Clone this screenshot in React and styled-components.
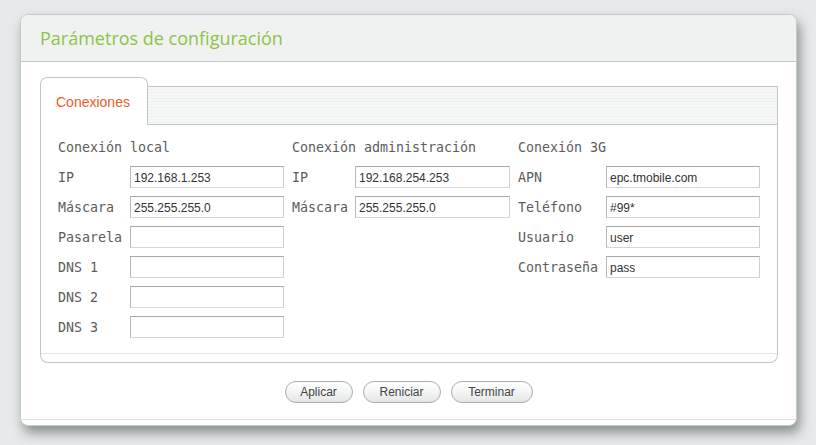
import React from "react";
import styled, { createGlobalStyle } from "styled-components";

const Global = createGlobalStyle`
  html, body { margin: 0; padding: 0; }
  body {
    background: #e7eaea;
    width: 816px;
    height: 445px;
    overflow: hidden;
    font-family: "Liberation Sans", Arial, sans-serif;
  }
`;

const Page = styled.div`
  padding: 14px 19px 0 20px;
`;

const Panel = styled.div`
  width: 777px;
  box-sizing: border-box;
  background: #fff;
  border: 1px solid #c6caca;
  border-radius: 8px;
  box-shadow: 3px 7px 12px rgba(60, 70, 70, 0.55);
  padding-bottom: 5px;
  overflow: hidden;
`;

const Header = styled.div`
  height: 46px;
  background: #f0f2f2;
  border-bottom: 1px solid #c2c6c6;
  display: flex;
  align-items: center;
  padding-left: 19px;
`;

const Title = styled.h1`
  margin: 0;
  font-family: "Open Sans", "DejaVu Sans", sans-serif;
  font-weight: 400;
  font-size: 18px;
  color: #8cc444;
`;

const Body = styled.div`
  padding: 15px 18px 0 19px;
`;

const TabBar = styled.div`
  display: flex;
  align-items: flex-start;
`;

const Tab = styled.div`
  box-sizing: border-box;
  width: 108px;
  height: 48px;
  border: 1px solid #c2c6c6;
  border-bottom: none;
  border-radius: 7px 7px 0 0;
  background: #fff;
  display: flex;
  align-items: center;
  padding-left: 15px;
  font-family: "Liberation Sans", Arial, sans-serif;
  font-size: 14px;
  color: #ea5e1f;
  margin-bottom: -1px;
  position: relative;
  z-index: 1;
`;

const Strip = styled.div`
  flex: 1;
  box-sizing: border-box;
  height: 39px;
  margin-top: 9px;
  margin-left: -1px;
  border: 1px solid #c2c6c6;
  border-left: none;
  background: repeating-linear-gradient(
    to bottom,
    #f6f7f7 0px,
    #f6f7f7 2px,
    #eff1f1 2px,
    #eff1f1 3px
  );
`;

const Content = styled.div`
  border: 1px solid #c2c6c6;
  border-top: none;
  border-radius: 0 0 8px 8px;
  padding-bottom: 8px;
`;

const Inner = styled.div`
  display: flex;
  gap: 8px;
  padding: 11px 17px 15px;
  border-bottom: 1px solid #e2e4e4;
`;

const Column = styled.div`
  display: grid;
  grid-template-columns: ${(p) => p.$label}px ${(p) => p.$input}px;
  grid-auto-rows: 22px;
  row-gap: 8px;
  align-items: center;
  align-content: start;
`;

const Heading = styled.div`
  grid-column: 1 / span 2;
  font-family: "DejaVu Sans Mono", monospace;
  font-size: 13.3px;
  color: #5c5c5c;
  white-space: nowrap;
`;

const Label = styled.label`
  font-family: "DejaVu Sans Mono", monospace;
  font-size: 13.3px;
  color: #5c5c5c;
  white-space: nowrap;
`;

const Input = styled.input`
  box-sizing: border-box;
  width: 100%;
  height: 22px;
  margin: 0;
  padding: 1px 3px 0;
  border: 1px solid;
  border-color: #a8a8a8 #cfcfcf #d6d6d6 #b8b8b8;
  background: #fff;
  font-family: "Liberation Sans", Arial, sans-serif;
  font-size: 12px;
  color: #333;
  outline: none;
`;

const Footer = styled.div`
  display: flex;
  justify-content: center;
  gap: 10px;
  padding: 18px 0 16px;
  border-bottom: 1px solid #dedede;
`;

const Button = styled.button`
  box-sizing: border-box;
  width: ${(p) => p.$w}px;
  height: 22px;
  border: 1px solid #a9adad;
  border-radius: 11px;
  background: linear-gradient(to bottom, #ffffff 0%, #f3f4f4 50%, #e4e6e6 100%);
  font-family: "Liberation Sans", Arial, sans-serif;
  font-size: 12px;
  color: #444;
  padding: 0;
  cursor: pointer;
`;

const columns = [
  {
    title: "Conexión local",
    label: 72,
    input: 154,
    rows: [
      ["IP", "192.168.1.253"],
      ["Máscara", "255.255.255.0"],
      ["Pasarela", ""],
      ["DNS 1", ""],
      ["DNS 2", ""],
      ["DNS 3", ""],
    ],
  },
  {
    title: "Conexión administración",
    label: 63,
    input: 155,
    rows: [
      ["IP", "192.168.254.253"],
      ["Máscara", "255.255.255.0"],
    ],
  },
  {
    title: "Conexión 3G",
    label: 88,
    input: 154,
    rows: [
      ["APN", "epc.tmobile.com"],
      ["Teléfono", "#99*"],
      ["Usuario", "user"],
      ["Contraseña", "pass"],
    ],
  },
];

export default function App() {
  return (
    <Page>
      <Global />
      <Panel>
        <Header>
          <Title>Parámetros de configuración</Title>
        </Header>
        <Body>
          <TabBar>
            <Tab>Conexiones</Tab>
            <Strip />
          </TabBar>
          <Content>
            <Inner>
              {columns.map((c) => (
                <Column key={c.title} $label={c.label} $input={c.input}>
                  <Heading>{c.title}</Heading>
                  {c.rows.map(([l, v]) => (
                    <React.Fragment key={l}>
                      <Label>{l}</Label>
                      <Input defaultValue={v} />
                    </React.Fragment>
                  ))}
                </Column>
              ))}
            </Inner>
          </Content>
        </Body>
        <Footer>
          <Button $w={68}>Aplicar</Button>
          <Button $w={78}>Reniciar</Button>
          <Button $w={82}>Terminar</Button>
        </Footer>
      </Panel>
    </Page>
  );
}
